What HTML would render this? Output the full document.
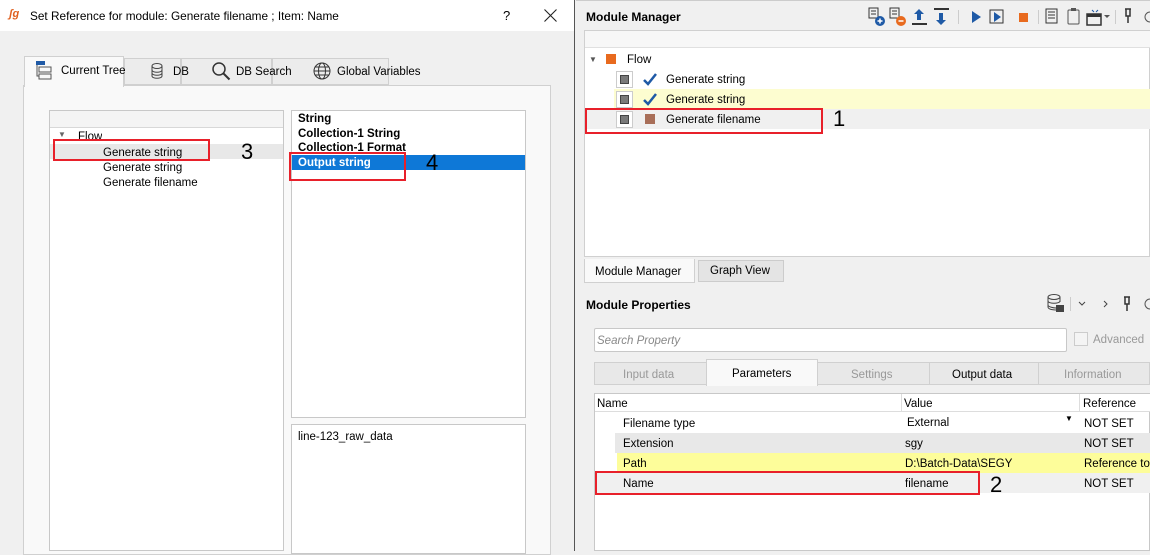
<!DOCTYPE html>
<html><head><meta charset="utf-8">
<style>
*{box-sizing:border-box;margin:0;padding:0}
body{width:1150px;height:551px;overflow:hidden;background:#f0f0f0;font-family:"Liberation Sans",sans-serif;font-size:11.5px;color:#000;position:relative}
.a{position:absolute}
.red{position:absolute;border:2px solid #e8202a}
.num{position:absolute;font-size:22px;font-family:"Liberation Sans",sans-serif;font-weight:normal}
.t{position:absolute;white-space:nowrap}
</style></head><body>
<!-- Dialog -->
<div class="a" style="left:0;top:0;width:575px;height:551px;background:#f0f0f0;border-right:1px solid #555"></div>
<div class="a" style="left:0;top:0;width:574px;height:31px;background:#fff"></div>
<div class="t" style="left:9px;top:8px;color:#e06020;font-size:11px;font-style:italic;font-weight:bold">ʃg</div>
<div class="t" style="left:30px;top:9px;font-size:11.8px">Set Reference for module: Generate filename ; Item: Name</div>
<div class="t" style="left:503px;top:8px;font-size:13px">?</div>
<svg class="a" style="left:544px;top:9px" width="13" height="13"><path d="M0.5 0.5l12 12M12.5 0.5l-12 12" stroke="#222" stroke-width="1.1"/></svg>
<!-- tab pane -->
<div class="a" style="left:23px;top:85px;width:528px;height:470px;background:#f9f9f9;border:1px solid #d0d0d0"></div>
<div class="a" style="left:24px;top:56px;width:100px;height:31px;background:#f9f9f9;border:1px solid #d0d0d0;border-bottom:none"></div>
<div class="a" style="left:124px;top:58px;width:57px;height:27px;background:#ececec;border:1px solid #d0d0d0"></div>
<div class="a" style="left:181px;top:58px;width:91px;height:27px;background:#ececec;border:1px solid #d0d0d0"></div>
<div class="a" style="left:272px;top:58px;width:117px;height:27px;background:#ececec;border:1px solid #d0d0d0"></div>
<svg class="a" style="left:36px;top:61px" width="16" height="20"><rect x="0" y="0" width="9" height="4" fill="#1f5aa6"/><rect x="3" y="6" width="12" height="5" fill="none" stroke="#555"/><rect x="3" y="13" width="12" height="5" fill="none" stroke="#555"/><path d="M1 4v11h2" stroke="#555" fill="none"/></svg>
<div class="t" style="left:61px;top:65px">Current Tree</div>
<svg class="a" style="left:151px;top:63px" width="12" height="16"><ellipse cx="6" cy="3" rx="5" ry="2.5" fill="none" stroke="#444"/><path d="M1 3v10c0 3 10 3 10 0V3M1 7c0 3 10 3 10 0M1 10c0 3 10 3 10 0" fill="none" stroke="#444"/></svg>
<div class="t" style="left:173px;top:66px">DB</div>
<svg class="a" style="left:211px;top:61px" width="20" height="20"><circle cx="8" cy="8" r="6" fill="none" stroke="#333" stroke-width="1.5"/><path d="M12.5 12.5l6 6" stroke="#333" stroke-width="2"/></svg>
<div class="t" style="left:236px;top:66px">DB Search</div>
<svg class="a" style="left:313px;top:62px" width="18" height="18"><circle cx="9" cy="9" r="8" fill="none" stroke="#333"/><ellipse cx="9" cy="9" rx="3.5" ry="8" fill="none" stroke="#333"/><path d="M1 9h16M2.5 5h13M2.5 13h13" stroke="#333" fill="none"/></svg>
<div class="t" style="left:337px;top:66px">Global Variables</div>
<!-- tree -->
<div class="a" style="left:49px;top:110px;width:235px;height:441px;background:#fff;border:1px solid #c8c8c8"></div>
<div class="a" style="left:50px;top:111px;width:233px;height:17px;background:#f4f4f4;border-bottom:1px solid #d8d8d8"></div>
<div class="a" style="left:50px;top:144px;width:233px;height:15px;background:#e8e8e8"></div>
<div class="t" style="left:58px;top:130px;font-size:8px;color:#666">▼</div>
<div class="t" style="left:78px;top:131px;height:9px;overflow:hidden">Flow</div>
<div class="t" style="left:103px;top:147px">Generate string</div>
<div class="t" style="left:103px;top:162px">Generate string</div>
<div class="t" style="left:103px;top:177px">Generate filename</div>
<div class="red" style="left:53px;top:139px;width:157px;height:22px"></div>
<div class="num" style="left:241px;top:139px">3</div>
<!-- list -->
<div class="a" style="left:291px;top:110px;width:235px;height:308px;background:#fff;border:1px solid #c8c8c8"></div>
<div class="a" style="left:292px;top:155px;width:233px;height:15px;background:#0e78d7"></div>
<div class="t" style="left:298px;top:113px;font-weight:bold">String</div>
<div class="t" style="left:298px;top:128px;font-weight:bold">Collection-1 String</div>
<div class="t" style="left:298px;top:142px;font-weight:bold;height:12px;overflow:hidden">Collection-1 Format</div>
<div class="t" style="left:298px;top:157px;font-weight:bold;color:#fff">Output string</div>
<div class="red" style="left:289px;top:152px;width:117px;height:29px"></div>
<div class="num" style="left:426px;top:150px">4</div>
<div class="a" style="left:291px;top:424px;width:235px;height:130px;background:#fff;border:1px solid #c8c8c8"></div>
<div class="t" style="left:298px;top:431px">line-123_raw_data</div>
<!-- Right: Module Manager -->
<div class="a" style="left:576px;top:0;width:574px;height:551px;background:#f0f0f0;border-top:1px solid #ccc"></div>
<div class="t" style="left:586px;top:10px;font-weight:bold;font-size:12px">Module Manager</div>
<svg class="a" style="left:868px;top:6px" width="282" height="22">
<g fill="none" stroke="#333"><rect x="1" y="2" width="9" height="10"/><path d="M3 5h5M3 8h5"/></g><circle cx="12" cy="15" r="5" fill="#1f5aa6"/><path d="M9.5 15h5M12 12.5v5" stroke="#fff" stroke-width="1.5"/>
<g fill="none" stroke="#333"><rect x="22" y="2" width="9" height="10"/><path d="M24 5h5M24 8h5"/></g><circle cx="33" cy="15" r="5" fill="#e86a1e"/><path d="M30.5 15h5" stroke="#fff" stroke-width="1.5"/>
<path d="M51 3l-5 5h3v6h4V8h3z" fill="#1f5aa6"/><rect x="44" y="17" width="15" height="2" fill="#333"/>
<rect x="66" y="2" width="15" height="2" fill="#333"/><path d="M73 19l-5-5h3V7h4v7h3z" fill="#1f5aa6"/>
<rect x="90" y="4" width="1" height="14" fill="#ccc"/>
<path d="M104 5v12l9-6z" fill="#1f5aa6"/>
<rect x="122" y="4" width="13" height="13" fill="none" stroke="#333"/><path d="M126 6v10l7-5z" fill="#1f5aa6"/>
<rect x="151" y="7" width="9" height="9" fill="#e86a1e"/>
<rect x="170" y="4" width="1" height="14" fill="#ccc"/>
<rect x="178" y="3" width="11" height="14" fill="none" stroke="#333"/><path d="M180 6h7M180 9h7M180 12h7" stroke="#333"/>
<rect x="200" y="4" width="11" height="14" rx="1" fill="none" stroke="#555"/><rect x="203" y="2" width="5" height="3" fill="#555"/>
<rect x="219" y="8" width="14" height="11" fill="none" stroke="#333" stroke-width="1.5"/><rect x="219" y="8" width="14" height="3" fill="#333"/><path d="M224 4l2 2M230 4l-2 2" stroke="#1f5aa6"/>
<path d="M236 9h6l-3 3z" fill="#555"/>
<rect x="247" y="4" width="1" height="14" fill="#ccc"/>
<path d="M257 3h6M258 3v7h4V3M260 10v7" stroke="#333" fill="none" stroke-width="1.5"/>
<circle cx="282" cy="11" r="5" fill="none" stroke="#555"/>
</svg>
<div class="a" style="left:584px;top:30px;width:566px;height:227px;background:#fff;border:1px solid #d0d0d0"></div>
<div class="a" style="left:585px;top:31px;width:565px;height:17px;background:#f7f7f7;border-bottom:1px solid #e0e0e0"></div>
<div class="a" style="left:614px;top:89px;width:536px;height:20px;background:#fdfdd0"></div>
<div class="a" style="left:585px;top:109px;width:565px;height:20px;background:#f0f0f0"></div>
<div class="t" style="left:589px;top:55px;font-size:8px;color:#555">▼</div>
<div class="a" style="left:606px;top:54px;width:10px;height:10px;background:#e86a1e"></div>
<div class="t" style="left:627px;top:54px">Flow</div>
<div class="a" style="left:616px;top:71px;width:17px;height:17px;border:1px solid #ccc;background:#fff"></div><div class="a" style="left:620px;top:75px;width:9px;height:9px;background:#7a7a7a;border:1px solid #444"></div>
<div class="a" style="left:616px;top:91px;width:17px;height:17px;border:1px solid #ccc;background:#fff"></div><div class="a" style="left:620px;top:95px;width:9px;height:9px;background:#7a7a7a;border:1px solid #444"></div>
<div class="a" style="left:616px;top:111px;width:17px;height:17px;border:1px solid #ccc;background:#fff"></div><div class="a" style="left:620px;top:115px;width:9px;height:9px;background:#7a7a7a;border:1px solid #444"></div>
<svg class="a" style="left:642px;top:73px" width="16" height="14"><path d="M2 7l4 4 8-10" stroke="#1f5aa6" stroke-width="2.5" fill="none"/></svg>
<svg class="a" style="left:642px;top:93px" width="16" height="14"><path d="M2 7l4 4 8-10" stroke="#1f5aa6" stroke-width="2.5" fill="none"/></svg>
<div class="a" style="left:645px;top:114px;width:10px;height:10px;background:#a86e58"></div>
<div class="t" style="left:666px;top:74px">Generate string</div>
<div class="t" style="left:666px;top:94px">Generate string</div>
<div class="t" style="left:666px;top:114px">Generate filename</div>
<div class="red" style="left:585px;top:108px;width:238px;height:26px"></div>
<div class="num" style="left:833px;top:106px">1</div>
<!-- bottom tabs -->
<div class="a" style="left:584px;top:259px;width:111px;height:24px;background:#f9f9f9;border:1px solid #d0d0d0;border-top:none"></div>
<div class="t" style="left:595px;top:266px">Module Manager</div>
<div class="a" style="left:698px;top:260px;width:86px;height:22px;background:#e4e4e4;border:1px solid #ccc"></div>
<div class="t" style="left:710px;top:265px">Graph View</div>
<!-- Module Properties -->
<div class="t" style="left:586px;top:298px;font-weight:bold;font-size:12px">Module Properties</div>
<svg class="a" style="left:1046px;top:293px" width="104" height="22">
<ellipse cx="8" cy="4" rx="6" ry="2.5" fill="none" stroke="#444"/><path d="M2 4v10c0 3 8 3 8 3M14 4v5M2 8c0 3 12 3 12 0M2 12c0 2 6 3 8 3" fill="none" stroke="#444"/><rect x="10" y="12" width="8" height="7" fill="#444"/>
<rect x="24" y="4" width="1" height="14" fill="#ccc"/>
<path d="M33 9l3 3 3-3" stroke="#444" fill="none"/>
<path d="M58 8l3 3-3 3" stroke="#444" fill="none"/>
<path d="M78 4h6M79 4v7h4V4M81 11v7" stroke="#333" fill="none" stroke-width="1.5"/>
<circle cx="104" cy="11" r="5" fill="none" stroke="#555"/>
</svg>
<div class="a" style="left:594px;top:328px;width:473px;height:24px;background:#fff;border:1px solid #c8c8c8;border-radius:2px"></div>
<div class="t" style="left:597px;top:335px;color:#888;font-style:italic">Search Property</div>
<div class="a" style="left:1074px;top:332px;width:14px;height:14px;border:1px solid #ccc;background:#f4f4f4"></div>
<div class="t" style="left:1093px;top:334px;color:#999">Advanced</div>
<div class="a" style="left:594px;top:362px;width:556px;height:23px;background:#e8e8e8;border:1px solid #d0d0d0"></div>
<div class="a" style="left:706px;top:359px;width:112px;height:27px;background:#f9f9f9;border:1px solid #d0d0d0;border-bottom:none"></div>
<div class="a" style="left:929px;top:362px;width:1px;height:23px;background:#d0d0d0"></div>
<div class="a" style="left:1038px;top:362px;width:1px;height:23px;background:#d0d0d0"></div>
<div class="t" style="left:623px;top:369px;color:#999">Input data</div>
<div class="t" style="left:732px;top:368px">Parameters</div>
<div class="t" style="left:851px;top:369px;color:#999">Settings</div>
<div class="t" style="left:952px;top:369px">Output data</div>
<div class="t" style="left:1064px;top:369px;color:#999">Information</div>
<div class="a" style="left:594px;top:393px;width:556px;height:158px;background:#fff;border:1px solid #c8c8c8"></div>
<div class="a" style="left:595px;top:394px;width:555px;height:18px;background:#fff;border-bottom:1px solid #ddd"></div>
<div class="a" style="left:901px;top:394px;width:1px;height:18px;background:#ddd"></div>
<div class="a" style="left:1079px;top:394px;width:1px;height:18px;background:#ddd"></div>
<div class="t" style="left:597px;top:398px">Name</div>
<div class="t" style="left:904px;top:398px">Value</div>
<div class="t" style="left:1083px;top:398px">Reference</div>
<div class="a" style="left:615px;top:433px;width:535px;height:20px;background:#e8e8e8"></div>
<div class="a" style="left:617px;top:453px;width:533px;height:20px;background:#fdfd9a"></div>
<div class="a" style="left:595px;top:473px;width:555px;height:20px;background:#f0f0f0"></div>
<div class="t" style="left:623px;top:418px">Filename type</div><div class="t" style="left:907px;top:417px">External</div><div class="t" style="left:1065px;top:414px;font-size:8px">▼</div><div class="t" style="left:1084px;top:418px">NOT SET</div>
<div class="t" style="left:623px;top:438px">Extension</div><div class="t" style="left:905px;top:438px">sgy</div><div class="t" style="left:1084px;top:438px">NOT SET</div>
<div class="t" style="left:623px;top:458px">Path</div><div class="t" style="left:905px;top:458px">D:\Batch-Data\SEGY</div><div class="t" style="left:1084px;top:458px">Reference to</div>
<div class="t" style="left:623px;top:478px">Name</div><div class="t" style="left:905px;top:478px">filename</div><div class="t" style="left:1084px;top:478px">NOT SET</div>
<div class="red" style="left:595px;top:471px;width:385px;height:24px"></div>
<div class="num" style="left:990px;top:472px">2</div>
</body></html>
